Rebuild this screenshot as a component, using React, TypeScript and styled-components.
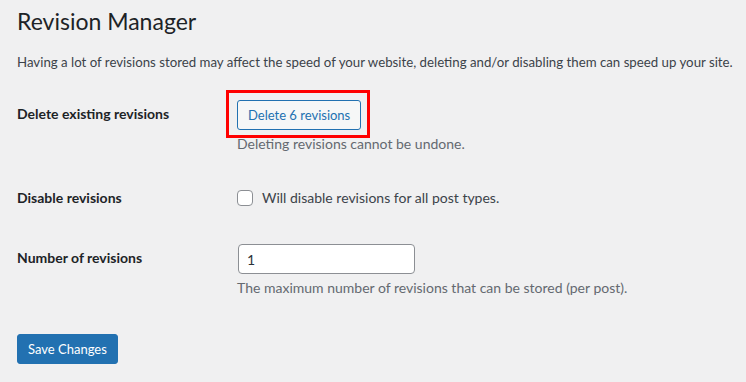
import React from "react";
import styled, { createGlobalStyle } from "styled-components";

const GlobalStyle = createGlobalStyle`
  html, body {
    margin: 0;
    padding: 0;
    background: #f0f0f1;
  }
  body {
    font-family: Lato, "Noto Sans", sans-serif;
    color: #3c434a;
    font-size: 13px;
  }
`;

const Wrap = styled.div`
  padding: 0 17px;
`;

const Title = styled.h1`
  margin: 0;
  padding: 7px 0 3px;
  font-size: 23px;
  font-weight: 400;
  line-height: 1.3;
  color: #1d2327;
`;

const Intro = styled.p`
  margin: 13px 0 0;
  font-size: 13.25px;
  line-height: 19.5px;
  white-space: nowrap;
`;

const FormTable = styled.div`
  margin-top: 13px;
`;

const Row = styled.div`
  display: grid;
  grid-template-columns: 210px 1fr;
`;

const Label = styled.div`
  padding: 20px 10px 20px 0;
  font-size: 14px;
  font-weight: 700;
  line-height: 1.3;
  color: #1d2327;
`;

const Field = styled.div`
  padding: 15px 10px;
  font-size: 14px;
  line-height: 1.5;
`;

const Highlight = styled.span`
  position: relative;
  display: inline-block;
  &::after {
    content: "";
    position: absolute;
    top: -10px;
    left: -11px;
    right: -9px;
    bottom: -8px;
    border: 3px solid #ff0000;
    pointer-events: none;
  }
`;

const Button = styled.button<{ $primary?: boolean }>`
  display: inline-block;
  box-sizing: border-box;
  min-height: 30px;
  margin: 0;
  padding: 0 10px;
  font-family: inherit;
  font-size: 13px;
  line-height: 28px;
  border-radius: 3px;
  border: 1px solid #2271b1;
  background: ${(p) => (p.$primary ? "#2271b1" : "#f6f7f7")};
  color: ${(p) => (p.$primary ? "#ffffff" : "#2271b1")};
  cursor: pointer;
  vertical-align: top;
`;

const Description = styled.p`
  margin: 4px 0 0;
  color: #646970;
  font-size: 14px;
  line-height: 19.5px;
`;

const CheckLabel = styled.label`
  display: flex;
  align-items: center;
  gap: 9px;
  margin: 4.5px 0 6px;
  line-height: 20px;
  font-size: 14px;
  color: #3c434a;
`;

const Checkbox = styled.span`
  display: inline-block;
  box-sizing: border-box;
  width: 16px;
  height: 16px;
  border: 1px solid #8c8f94;
  border-radius: 4px;
  background: #fff;
`;

const NumberInput = styled.input`
  display: block;
  box-sizing: border-box;
  width: 177px;
  height: 30px;
  margin: 0 0 0 1px;
  padding: 0 8px;
  border: 1px solid #8c8f94;
  border-radius: 4px;
  background: #fff;
  font-family: inherit;
  font-size: 14px;
  color: #2c3338;
  outline: none;
`;

const Submit = styled.div`
  padding: 21.5px 0 10px;
`;

export default function App() {
  return (
    <Wrap>
      <GlobalStyle />
      <Title>Revision Manager</Title>
      <Intro>
        Having a lot of revisions stored may affect the speed of your website,
        deleting and/or disabling them can speed up your site.
      </Intro>
      <FormTable>
        <Row>
          <Label>Delete existing revisions</Label>
          <Field>
            <Highlight>
              <Button>Delete 6 revisions</Button>
            </Highlight>
            <Description>Deleting revisions cannot be undone.</Description>
          </Field>
        </Row>
        <Row>
          <Label>Disable revisions</Label>
          <Field>
            <CheckLabel>
              <Checkbox />
              Will disable revisions for all post types.
            </CheckLabel>
          </Field>
        </Row>
        <Row>
          <Label>Number of revisions</Label>
          <Field>
            <NumberInput type="text" defaultValue="1" />
            <Description>
              The maximum number of revisions that can be stored (per post).
            </Description>
          </Field>
        </Row>
      </FormTable>
      <Submit>
        <Button $primary>Save Changes</Button>
      </Submit>
    </Wrap>
  );
}
